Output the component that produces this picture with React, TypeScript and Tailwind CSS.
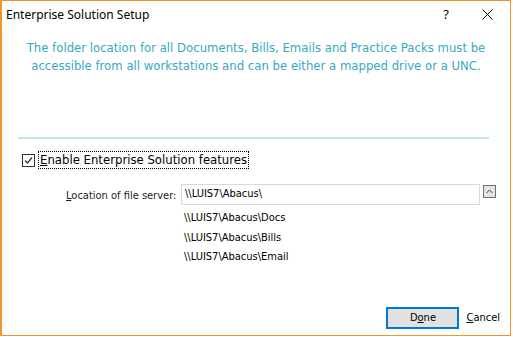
import React from "react";

export default function App() {
  const f = { fontFamily: "Tahoma, 'DejaVu Sans Condensed', 'Liberation Sans', sans-serif" };
  return (
    <div className="w-[513px] h-[337px] bg-white relative" style={f}>
      <div className="w-[511px] h-[336px] border border-[#f0952d] border-l-2 bg-white flex flex-col">
        <div className="h-[27px] flex items-center pl-[4px] text-[12px] text-black" style={{ fontFamily: "'Noto Sans', 'Open Sans', sans-serif" }}>
          <span className="flex-1">Enterprise Solution Setup</span>
          <span className="w-[46px] text-center text-[13px] pl-[6px] mr-[-2px]">?</span>
          <span className="w-[46px] flex justify-center">
            <svg width="11" height="11" viewBox="0 0 11 11"><path d="M0.5 0.5L10.5 10.5M10.5 0.5L0.5 10.5" stroke="#000" strokeWidth="1" /></svg>
          </span>
        </div>
        <div className="px-[16px] pt-[11px] text-center text-[13px] leading-[18px] text-[#3aa8bf]">
          The folder location for all Documents, Bills, Emails and Practice Packs must be accessible from all workstations and can be either a mapped drive or a UNC.
        </div>
        <div className="ml-[16px] mr-[21px] mt-[62px] h-[2px] bg-[#bde7eb]" />
        <div className="flex items-center ml-[20px] mt-[12px] text-[13px] text-black">
          <span className="w-[13px] h-[13px] border border-[#333] flex items-center justify-center">
            <svg width="11" height="11" viewBox="0 0 11 11"><path d="M2 5.5L4.5 8L9 2.5" stroke="#333" strokeWidth="1.2" fill="none" /></svg>
          </span>
          <span className="ml-[3px] px-[1px] border border-dotted border-black leading-[16px]"><span className="underline">E</span>nable Enterprise Solution features</span>
        </div>
        <div className="flex items-start ml-[64px] mt-[15px] text-[11px] text-[#222]">
          <span className="mt-[4px] w-[115px]"><span className="underline">L</span>ocation of file server:</span>
          <div className="flex flex-col">
            <div className="w-[299px] h-[21px] border border-[#d9d9d9] flex items-center pl-[3px] text-black">\\LUIS7\Abacus\</div>
            <div className="pl-[3px] mt-[3px] leading-[19.5px] text-black">
              <div>\\LUIS7\Abacus\Docs</div>
              <div>\\LUIS7\Abacus\Bills</div>
              <div>\\LUIS7\Abacus\Email</div>
            </div>
          </div>
          <div className="ml-[3px] mt-[1px] w-[13px] h-[13px] border border-[#707070] bg-[#e5e5e5] flex items-center justify-center">
            <svg width="9" height="9" viewBox="0 0 9 9"><path d="M1.5 6L4.5 3L7.5 6" stroke="#444" strokeWidth="1" fill="none" /></svg>
          </div>
        </div>
        <div className="flex-1" />
        <div className="flex items-center justify-end pr-[10px] pb-[6px] text-[11px] text-black">
          <div className="w-[73px] h-[22px] border-2 border-[#0078d7] bg-[#e1e1e1] flex items-center justify-center">D<span className="underline">o</span>ne</div>
          <span className="ml-[7px]"><span className="underline">C</span>ancel</span>
        </div>
      </div>
    </div>
  );
}
